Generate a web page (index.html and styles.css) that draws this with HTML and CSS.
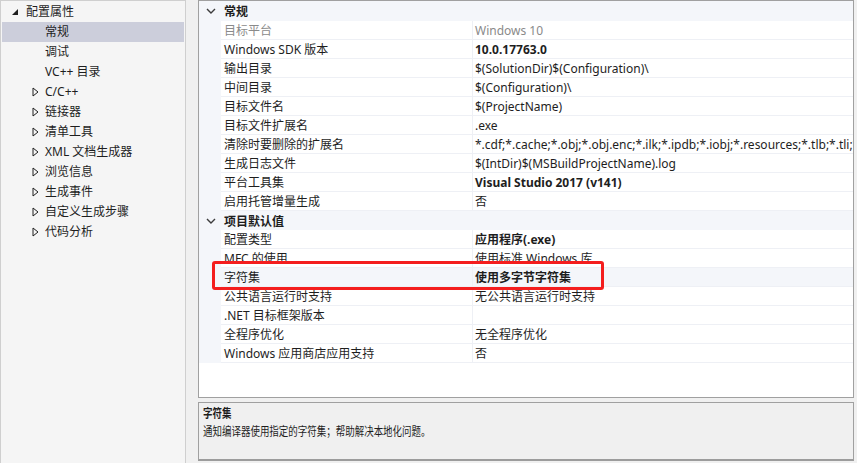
FILE: index.html
```html
<!DOCTYPE html>
<html lang="zh-CN">
<head>
<meta charset="utf-8">
<title>属性页</title>
<link rel="stylesheet" href="styles.css">
</head>
<body>
<div class="window">
  <div class="tree">
    <div class="node root"><span class="tw"><svg width="8" height="8" viewBox="0 0 8 8"><path d="M7 1 L7 7 L1 7 Z" fill="#1e1e1e"/></svg></span><span>配置属性</span></div>
    <div class="node leaf sel"><span>常规</span></div>
    <div class="node leaf"><span>调试</span></div>
    <div class="node leaf"><span>VC++ 目录</span></div>
    <div class="node child"><span class="tw"><svg width="7" height="10" viewBox="0 0 7 10"><path d="M1 1 L6 5 L1 9 Z" fill="none" stroke="#1e1e1e" stroke-width="1"/></svg></span><span>C/C++</span></div>
    <div class="node child"><span class="tw"><svg width="7" height="10" viewBox="0 0 7 10"><path d="M1 1 L6 5 L1 9 Z" fill="none" stroke="#1e1e1e" stroke-width="1"/></svg></span><span>链接器</span></div>
    <div class="node child"><span class="tw"><svg width="7" height="10" viewBox="0 0 7 10"><path d="M1 1 L6 5 L1 9 Z" fill="none" stroke="#1e1e1e" stroke-width="1"/></svg></span><span>清单工具</span></div>
    <div class="node child"><span class="tw"><svg width="7" height="10" viewBox="0 0 7 10"><path d="M1 1 L6 5 L1 9 Z" fill="none" stroke="#1e1e1e" stroke-width="1"/></svg></span><span>XML 文档生成器</span></div>
    <div class="node child"><span class="tw"><svg width="7" height="10" viewBox="0 0 7 10"><path d="M1 1 L6 5 L1 9 Z" fill="none" stroke="#1e1e1e" stroke-width="1"/></svg></span><span>浏览信息</span></div>
    <div class="node child"><span class="tw"><svg width="7" height="10" viewBox="0 0 7 10"><path d="M1 1 L6 5 L1 9 Z" fill="none" stroke="#1e1e1e" stroke-width="1"/></svg></span><span>生成事件</span></div>
    <div class="node child"><span class="tw"><svg width="7" height="10" viewBox="0 0 7 10"><path d="M1 1 L6 5 L1 9 Z" fill="none" stroke="#1e1e1e" stroke-width="1"/></svg></span><span>自定义生成步骤</span></div>
    <div class="node child"><span class="tw"><svg width="7" height="10" viewBox="0 0 7 10"><path d="M1 1 L6 5 L1 9 Z" fill="none" stroke="#1e1e1e" stroke-width="1"/></svg></span><span>代码分析</span></div>
  </div>

  <div class="main">
    <div class="grid">
      <div class="cat"><span class="chev"><svg width="10" height="6" viewBox="0 0 10 6"><path d="M1 1 L5 5 L9 1" fill="none" stroke="#3c3c3c" stroke-width="1.4"/></svg></span><span class="cat-name">常规</span></div>
      <div class="row dis"><span class="gut"></span><span class="name">目标平台</span><span class="val">Windows 10</span></div>
      <div class="row"><span class="gut"></span><span class="name">Windows SDK 版本</span><span class="val b">10.0.17763.0</span></div>
      <div class="row"><span class="gut"></span><span class="name">输出目录</span><span class="val">$(SolutionDir)$(Configuration)\</span></div>
      <div class="row"><span class="gut"></span><span class="name">中间目录</span><span class="val">$(Configuration)\</span></div>
      <div class="row"><span class="gut"></span><span class="name">目标文件名</span><span class="val">$(ProjectName)</span></div>
      <div class="row"><span class="gut"></span><span class="name">目标文件扩展名</span><span class="val">.exe</span></div>
      <div class="row"><span class="gut"></span><span class="name">清除时要删除的扩展名</span><span class="val clip">*.cdf;*.cache;*.obj;*.obj.enc;*.ilk;*.ipdb;*.iobj;*.resources;*.tlb;*.tli;*.tlh;*.tmp;*.rsp;*.pgc;*.pgd;*.meta;*.tlog;*.manifest;*.res;*.pch;*.exp;*.idb;*.rep;*.xdc;*.pdb</span></div>
      <div class="row"><span class="gut"></span><span class="name">生成日志文件</span><span class="val">$(IntDir)$(MSBuildProjectName).log</span></div>
      <div class="row"><span class="gut"></span><span class="name">平台工具集</span><span class="val b">Visual Studio 2017 (v141)</span></div>
      <div class="row"><span class="gut"></span><span class="name">启用托管增量生成</span><span class="val">否</span></div>
      <div class="cat"><span class="chev"><svg width="10" height="6" viewBox="0 0 10 6"><path d="M1 1 L5 5 L9 1" fill="none" stroke="#3c3c3c" stroke-width="1.4"/></svg></span><span class="cat-name">项目默认值</span></div>
      <div class="row"><span class="gut"></span><span class="name">配置类型</span><span class="val b">应用程序(.exe)</span></div>
      <div class="row"><span class="gut"></span><span class="name">MFC 的使用</span><span class="val">使用标准 Windows 库</span></div>
      <div class="row selrow"><span class="gut"></span><span class="name">字符集</span><span class="val b">使用多字节字符集</span></div>
      <div class="row"><span class="gut"></span><span class="name">公共语言运行时支持</span><span class="val">无公共语言运行时支持</span></div>
      <div class="row"><span class="gut"></span><span class="name">.NET 目标框架版本</span><span class="val"></span></div>
      <div class="row"><span class="gut"></span><span class="name">全程序优化</span><span class="val">无全程序优化</span></div>
      <div class="row"><span class="gut"></span><span class="name">Windows 应用商店应用支持</span><span class="val">否</span></div>
    </div>
    <div class="desc">
      <div class="desc-title"><span class="sq">字符集</span></div>
      <div class="desc-text"><span class="sq">通知编译器使用指定的字符集；帮助解决本地化问题。</span></div>
    </div>
  </div>
  <div class="highlight"></div>
</div>
</body>
</html>
```

FILE: styles.css
```css
* { box-sizing: border-box; }
html, body {
  margin: 0;
  padding: 0;
  background: #f0f0f0;
}
body {
  font-family: "Noto Sans", "Noto Sans CJK SC", sans-serif;
  font-size: 12px;
  color: #1e1e1e;
}
.window {
  position: relative;
  width: 857px;
  height: 463px;
  display: flex;
  overflow: hidden;
}
.tree {
  width: 186px;
  flex: none;
  height: 463px;
  background: #f5f5f5;
  border: 1px solid #cfcfcf;
  border-bottom: none;
  padding: 1px 1px 0 1px;
}
.node {
  height: 20px;
  display: flex;
  align-items: center;
  white-space: nowrap;
  line-height: 20px;
}
.node .tw {
  display: inline-flex;
  align-items: center;
}
.root { padding-left: 9px; }
.root .tw { width: 15px; justify-content: flex-start; }
.root .tw svg { margin-bottom: 1px; }
.leaf { padding-left: 43px; }
.child { padding-left: 29px; }
.child .tw { width: 14px; justify-content: flex-start; padding-left: 1px; }
.sel { background: #cccedb; }

.main {
  flex: 1;
  margin-left: 12px;
  margin-right: 3px;
  display: flex;
  flex-direction: column;
  gap: 4px;
}
.grid {
  height: 398px;
  background: #ffffff;
  border: 1px solid #a0a0a0;
  overflow: hidden;
}
.cat {
  height: 19px;
  background: #f4f6fa;
  display: flex;
  align-items: center;
  font-weight: bold;
}
.cat:first-child { height: 20px; }
.chev {
  width: 22px;
  display: inline-flex;
  justify-content: center;
  align-items: center;
  padding-left: 1px;
}
.cat-name { padding-left: 3px; }
.row {
  height: 19px;
  display: grid;
  grid-template-columns: 22px 252px 1fr;
}
.gut { background: #f4f6fa; }
.name, .val {
  border-bottom: 1px solid #eef0f5;
  white-space: nowrap;
  overflow: hidden;
  padding-top: 1px;
  line-height: 17px;
}
.name {
  padding-left: 3px;
  border-right: 1px solid #eef0f5;
}
.val { padding-left: 2px; }
.clip { text-overflow: clip; }
.b { font-weight: bold; }
.dis .name, .dis .val { color: #8a8a8a; }
.selrow .name, .selrow .val { background: #f4f6fa; }

.desc {
  height: 59px;
  background: #f0f0f0;
  border: 1px solid #a0a0a0;
  border-bottom: 2px solid #9c9c9c;
  padding: 3px 0 0 4px;
}
.desc-title { font-weight: bold; height: 17px; line-height: 16px; }
.desc-text { height: 17px; line-height: 17px; }
.sq {
  display: inline-block;
  transform: scaleX(0.79);
  transform-origin: left center;
  white-space: nowrap;
}
.highlight {
  position: absolute;
  left: 212px;
  top: 261px;
  width: 392px;
  height: 29px;
  border: 3px solid #f41e1e;
  border-radius: 3px;
}
```
